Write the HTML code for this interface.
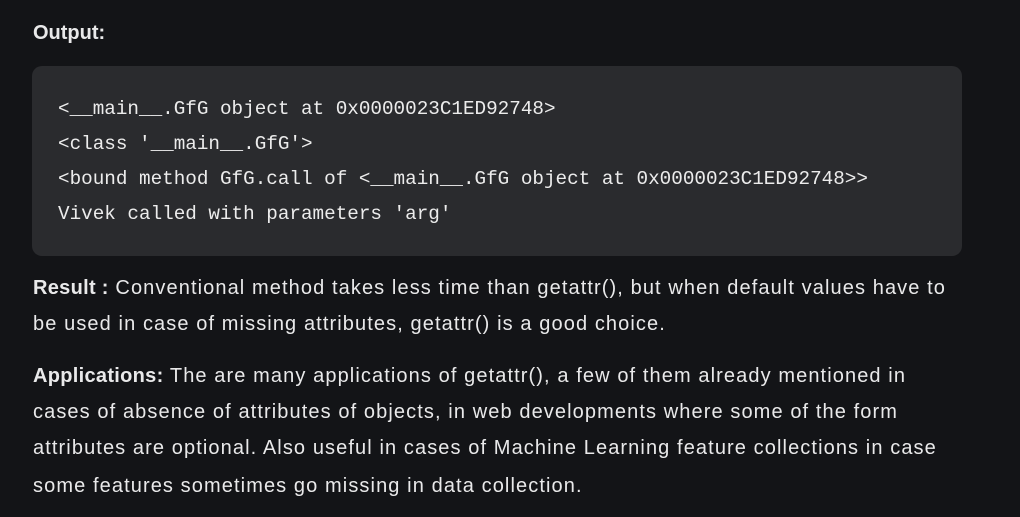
<!DOCTYPE html>
<html><head><meta charset="utf-8"><style>
html,body{margin:0;padding:0;background:#131417;width:1020px;height:517px;overflow:hidden;}
body{font-family:"Liberation Sans",sans-serif;color:#e9e9ea;}
.h{position:absolute;left:33px;top:22px;font-size:20px;font-weight:bold;}
.code{position:absolute;left:32px;top:66px;width:930px;height:190px;background:#2a2b2e;border-radius:10px;}
.code div{position:absolute;left:26px;font-family:"Liberation Mono",monospace;font-size:19.3px;white-space:pre;color:#ececec;}
.p{position:absolute;left:33px;font-size:20px;letter-spacing:1.1px;white-space:nowrap;}
b{font-weight:bold;letter-spacing:0.3px;}
</style></head><body>
<div class="h">Output:</div>
<div class="code">
<div style="top:32px">&lt;__main__.GfG object at 0x0000023C1ED92748&gt;</div>
<div style="top:67px">&lt;class '__main__.GfG'&gt;</div>
<div style="top:102px">&lt;bound method GfG.call of &lt;__main__.GfG object at 0x0000023C1ED92748&gt;&gt;</div>
<div style="top:137px">Vivek called with parameters 'arg'</div>
</div>
<div class="p" style="top:277px"><b>Result :</b> Conventional method takes less time than getattr(), but when default values have to</div>
<div class="p" style="top:313px">be used in case of missing attributes, getattr() is a good choice.</div>
<div class="p" style="top:365px"><b>Applications:</b> The are many applications of getattr(), a few of them already mentioned in</div>
<div class="p" style="top:401px">cases of absence of attributes of objects, in web developments where some of the form</div>
<div class="p" style="top:437px">attributes are optional. Also useful in cases of Machine Learning feature collections in case</div>
<div class="p" style="top:475px">some features sometimes go missing in data collection.</div>
</body></html>
